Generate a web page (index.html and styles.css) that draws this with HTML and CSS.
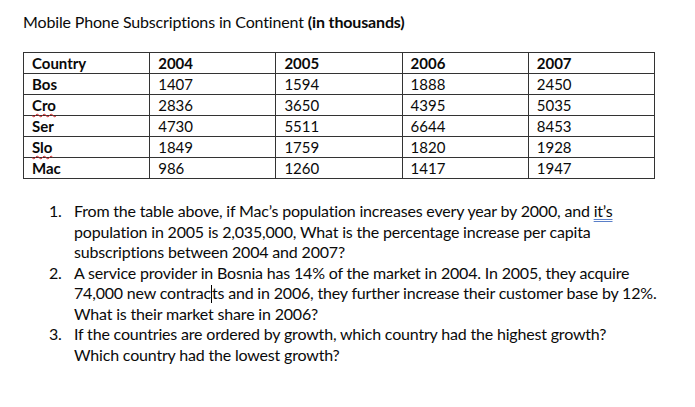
FILE: index.html
```html
<!DOCTYPE html>
<html>
<head>
<meta charset="utf-8">
<link rel="stylesheet" href="styles.css">
</head>
<body>
<div class="page">
  <h1 class="title">Mobile Phone Subscriptions in Continent <b>(in thousands)</b></h1>
  <table class="data">
    <tr class="head"><th>Country</th><th>2004</th><th>2005</th><th>2006</th><th>2007</th></tr>
    <tr><th>Bos</th><td>1407</td><td>1594</td><td>1888</td><td>2450</td></tr>
    <tr><th><span class="spell">Cro</span></th><td>2836</td><td>3650</td><td>4395</td><td>5035</td></tr>
    <tr><th>Ser</th><td>4730</td><td>5511</td><td>6644</td><td>8453</td></tr>
    <tr><th><span class="spell">Slo</span></th><td>1849</td><td>1759</td><td>1820</td><td>1928</td></tr>
    <tr><th>Mac</th><td>986</td><td>1260</td><td>1417</td><td>1947</td></tr>
  </table>
  <ol class="questions">
    <li>From the table above, if Mac’s population increases every year by 2000, and <span class="grammar">it’s</span><br>population in 2005 is 2,035,000, What is the percentage increase per capita<br>subscriptions between 2004 and 2007?</li>
    <li>A service provider in Bosnia has 14% of the market in 2004. In 2005, they acquire<br>74,000 new contrac<span class="caret"></span>ts and in 2006, they further increase their customer base by 12%.<br>What is their market share in 2006?</li>
    <li>If the countries are ordered by growth, which country had the highest growth?<br>Which country had the lowest growth?</li>
  </ol>
</div>
</body>
</html>
```
FILE: styles.css
```css
html, body {
  margin: 0;
  padding: 0;
  background: #fff;
}
body {
  width: 695px;
  height: 407px;
  overflow: hidden;
  font-family: Lato, "Liberation Sans", sans-serif;
  color: #0a0a0a;
}
.page {
  padding: 12px 0 0 23px;
}
.title {
  margin: 0;
  font-size: 16px;
  font-weight: normal;
  line-height: 20px;
  letter-spacing: -0.15px;
}
.title b {
  font-weight: bold;
}
.data {
  margin-top: 20px;
  border-collapse: collapse;
  width: 632px;
  table-layout: fixed;
  font-size: 15px;
}
.data th, .data td {
  border: 1px solid #333;
  height: 20px;
  padding: 0 0 0 8px;
  text-align: left;
  line-height: 20px;
}
.data th {
  font-weight: bold;
}
.data td {
  font-weight: normal;
}
.spell {
  text-decoration: underline wavy #d02020;
  text-decoration-thickness: 1px;
  text-underline-offset: 2px;
}
.questions {
  margin: 22px 0 0 0;
  padding-left: 26px;
  list-style: none;
  counter-reset: q;
  font-size: 16px;
  line-height: 20.5px;
  letter-spacing: -0.18px;
}
.questions li {
  counter-increment: q;
  padding-left: 25px;
  text-indent: -25px;
}
.questions li::before {
  content: counter(q) ".";
  display: inline-block;
  width: 25px;
  text-indent: 0;
}
.grammar {
  text-decoration: underline double #5a7fc8;
  text-decoration-thickness: 1px;
  text-underline-offset: 2px;
}
.caret {
  display: inline-block;
  width: 0;
  height: 18px;
  border-left: 1px solid #000;
  vertical-align: -4px;
}
```
